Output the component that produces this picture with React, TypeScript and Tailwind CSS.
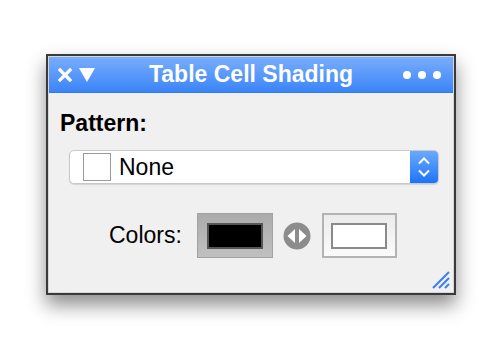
import React from 'react';

const font = { fontFamily: '"Liberation Sans", Arial, sans-serif' };

function TitleBar() {
  return (
    <div className="relative flex h-[36px] items-center bg-gradient-to-b from-[#78adfc] to-[#3a84f8] border-b border-[#3479e6] text-white">
      <div className="flex items-center pl-[9px] gap-[7px]">
        <svg width="14" height="14" viewBox="0 0 14 14">
          <path d="M2 2 L12 12 M12 2 L2 12" stroke="white" strokeWidth="3.2" strokeLinecap="square" />
        </svg>
        <svg width="16" height="14" viewBox="0 0 16 14">
          <polygon points="0,0 16,0 8,14" fill="white" />
        </svg>
      </div>
      <div className="absolute inset-0 flex items-center justify-center text-[23px] font-bold leading-none">
        Table Cell Shading
      </div>
      <div className="ml-auto flex items-center gap-[7px] pr-[12px]">
        <span className="block h-[8px] w-[8px] rounded-full bg-white" />
        <span className="block h-[8px] w-[8px] rounded-full bg-white" />
        <span className="block h-[8px] w-[8px] rounded-full bg-white" />
      </div>
    </div>
  );
}

function PatternSelect() {
  return (
    <div className="ml-[20px] mr-[14px] flex h-[34px] items-stretch rounded-[5px] border border-[#c9c9c9] bg-white shadow-[0_1px_1px_rgba(0,0,0,0.12)] overflow-hidden">
      <div className="flex flex-1 items-center pl-[13px]">
        <div className="h-[28px] w-[28px] border border-[#9a9a9a] bg-white" />
        <span className="ml-[8px] text-[23px] leading-none text-black">None</span>
      </div>
      <div className="flex w-[28px] items-center justify-center bg-gradient-to-b from-[#6aa9fd] to-[#1a74f6]">
        <svg width="14" height="24" viewBox="0 0 14 24">
          <path d="M2 8.5 L7 3.5 L12 8.5 M2 15.5 L7 20.5 L12 15.5" stroke="white" strokeWidth="2" fill="none" />
        </svg>
      </div>
    </div>
  );
}

function ColorsRow() {
  return (
    <div className="mt-[29px] flex items-center pl-[60px]">
      <span className="text-[23px] leading-none text-black">Colors:</span>
      <div className="ml-[15px] flex h-[45px] w-[76px] items-center justify-center border border-[#a2a2a2] bg-gradient-to-b from-[#ababab] to-[#c0c0c0]">
        <div className="h-[26px] w-[56px] border-2 border-[#555] bg-black" />
      </div>
      <svg className="ml-[10px]" width="28" height="28" viewBox="0 0 28 28">
        <circle cx="14" cy="14" r="13.5" fill="#8c8c8c" />
        <polygon points="4.5,14 12,7 12,21" fill="white" />
        <polygon points="23.5,14 16,7 16,21" fill="white" />
      </svg>
      <div className="ml-[11px] flex h-[45px] w-[75px] items-center justify-center border-2 border-[#b3b3b3] bg-gradient-to-b from-[#ececec] to-[#fafafa]">
        <div className="h-[26px] w-[56px] border-2 border-[#8a8a8a] bg-white" />
      </div>
    </div>
  );
}

function ResizeGrip() {
  return (
    <svg className="absolute bottom-[3px] right-[3px]" width="18" height="18" viewBox="0 0 18 18">
      <path d="M1 17 L17 1 M7 17 L17 7 M13 17 L17 13" stroke="#3b7ff6" strokeWidth="2" />
    </svg>
  );
}

export default function App() {
  return (
    <div className="min-h-[347px] w-[501px] bg-white pl-[46px] pt-[54px]" style={font}>
      <div className="h-[241px] w-[410px] border-2 border-[#3a3a3a] shadow-[0_10px_18px_rgba(0,0,0,0.45)]">
        <div className="relative flex h-full flex-col border border-[#d6d6d6] bg-[#f0f0f0]">
          <TitleBar />
          <div className="flex flex-col">
            <div className="pl-[11px] pt-[17px] text-[23px] font-bold leading-[26px] text-black">Pattern:</div>
            <div className="mt-[14px]">
              <PatternSelect />
            </div>
            <ColorsRow />
          </div>
          <ResizeGrip />
        </div>
      </div>
    </div>
  );
}
